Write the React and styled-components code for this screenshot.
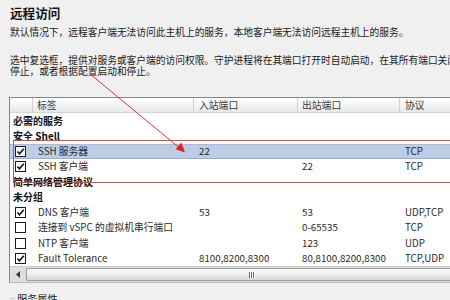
import React from "react";
import styled, { createGlobalStyle } from "styled-components";

const GlobalStyle = createGlobalStyle`
  html, body { margin: 0; padding: 0; background: #f0f0f0; overflow: hidden; }
  body { font-family: "Noto Sans CJK SC", "Liberation Sans", sans-serif; color: #222; }
`;

const Page = styled.div`
  position: relative;
  width: 600px;
  height: 300px;
  overflow: hidden;
  background: #f0f0f0;
`;

const Title = styled.div`
  padding: 5px 0 0 10px;
  height: 16px;
  font-size: 12.6px;
  line-height: 16px;
  font-weight: 700;
  color: #111;
`;

const Desc = styled.div`
  padding-left: 10px;
  margin-top: ${(p) => p.$top}px;
  font-size: 9.72px;
  line-height: 11px;
  color: #1a1a1a;
  white-space: nowrap;
`;

const Table = styled.div`
  margin: ${(p) => p.$top}px 0 0 9px;
  border-top: 1px solid #828790;
  border-left: 1px solid #828790;
  border-bottom: 1px solid #b8b8b8;
  background: #fff;
  width: 591px;
`;

const cols = "23px 161px 104px 102px 1fr";

const Header = styled.div`
  display: grid;
  grid-template-columns: ${cols};
  height: 15px;
  background: linear-gradient(#ffffff, #f1f2f3 60%, #e7e8ea);
  border-bottom: 1px solid #d5d5d5;
  box-sizing: border-box;
`;

const HeadCell = styled.div`
  border-right: 1px solid #d0d0d0;
  padding-left: ${(p) => p.$pad}px;
  font-size: 9.8px;
  line-height: 14px;
  color: #3a3a3a;
  white-space: nowrap;
`;

const Row = styled.div`
  display: grid;
  grid-template-columns: ${cols};
  height: 15.3px;
  align-items: center;
  box-sizing: border-box;
  background: ${(p) => (p.$selected ? "#bccde5" : "transparent")};
  border-top: 1px solid ${(p) => (p.$selected ? "#a9bcd8" : "transparent")};
  border-bottom: 1px solid ${(p) => (p.$selected ? "#98aece" : "transparent")};
`;

const GroupRow = styled.div`
  height: 15.3px;
  line-height: 15.3px;
  padding-left: 3px;
  font-size: 10px;
  font-weight: 700;
  color: #111;
  white-space: nowrap;
`;

const Cell = styled.div`
  padding-left: ${(p) => p.$pad}px;
  font-size: 9.75px;
  line-height: 13px;
  color: #2a2a2a;
  white-space: nowrap;
`;

const CheckCell = styled.div`
  display: flex;
  align-items: center;
  padding-left: 5px;
`;

const Box = styled.div`
  width: 11px;
  height: 11px;
  box-sizing: border-box;
  border: 1px solid #1c1c1c;
  background: #fff;
  display: flex;
  align-items: center;
  justify-content: center;
`;

const Scrollbar = styled.div`
  display: flex;
  height: 16px;
  background: #dedede;
  border-top: 1px solid #c8c8c8;
  box-sizing: border-box;
`;

const ArrowBtn = styled.div`
  width: 15px;
  display: flex;
  align-items: center;
  justify-content: center;
`;

const Thumb = styled.div`
  flex: 1;
  margin: 1px 0 1px 1px;
  border: 1px solid #9c9c9c;
  border-right: none;
  border-radius: 2px 0 0 2px;
  background: linear-gradient(#fafafa, #eeeeee 50%, #d6d6d6);
  position: relative;
`;

const Grip = styled.div`
  position: absolute;
  left: 222px;
  top: 3px;
  display: flex;
  gap: 1px;
  span {
    display: block;
    width: 1px;
    height: 6px;
    background: #6a6a6a;
    box-shadow: 1px 0 0 #fff;
  }
`;

const Group = styled.div`
  margin: 10px 0 0 10px;
  display: flex;
  align-items: center;
  gap: 2px;
`;

const GroupLine = styled.div`
  width: 5px;
  height: 1px;
  background: #c8c8c8;
`;

const GroupLabel = styled.div`
  font-size: 10.2px;
  line-height: 12px;
  color: #222;
`;

const Mark = styled.div`
  position: absolute;
  left: 13px;
  top: 140px;
  width: 620px;
  height: 41px;
  border: 1.5px solid #d94a4a;
  pointer-events: none;
`;

const Overlay = styled.svg`
  position: absolute;
  left: 0;
  top: 0;
  pointer-events: none;
`;

const Check = ({ on }) => (
  <Box>
    {on && (
      <svg width="9" height="9" viewBox="0 0 9 9">
        <polyline points="1.5,4.5 3.5,6.8 7.8,1.8" fill="none" stroke="#111" strokeWidth="1.6" />
      </svg>
    )}
  </Box>
);

const rows = [
  { group: "必需的服务" },
  { group: "安全 Shell" },
  { on: true, label: "SSH 服务器", inp: "22", out: "", proto: "TCP", selected: true },
  { on: true, label: "SSH 客户端", inp: "", out: "22", proto: "TCP" },
  { group: "简单网络管理协议" },
  { group: "未分组" },
  { on: true, label: "DNS 客户端", inp: "53", out: "53", proto: "UDP,TCP" },
  { on: false, label: "连接到 vSPC 的虚拟机串行端口", inp: "", out: "0-65535", proto: "TCP" },
  { on: false, label: "NTP 客户端", inp: "", out: "123", proto: "UDP" },
  { on: true, label: "Fault Tolerance", inp: "8100,8200,8300", out: "80,8100,8200,8300", proto: "TCP,UDP" },
];

export default function App() {
  return (
    <>
      <GlobalStyle />
      <Page>
        <Title>远程访问</Title>
        <Desc $top={5.5}>默认情况下，远程客户端无法访问此主机上的服务，本地客户端无法访问远程主机上的服务。</Desc>
        <Desc $top={17}>选中复选框，提供对服务或客户端的访问权限。守护进程将在其端口打开时自动启动，在其所有端口关闭时</Desc>
        <Desc $top={0}>停止，或者根据配置启动和停止。</Desc>
        <Table $top={20.5}>
          <Header>
            <HeadCell $pad={0} />
            <HeadCell $pad={4}>标签</HeadCell>
            <HeadCell $pad={5}>入站端口</HeadCell>
            <HeadCell $pad={4}>出站端口</HeadCell>
            <HeadCell $pad={5}>协议</HeadCell>
          </Header>
          {rows.map((r, i) =>
            r.group ? (
              <GroupRow key={i}>{r.group}</GroupRow>
            ) : (
              <Row key={i} $selected={r.selected}>
                <CheckCell>
                  <Check on={r.on} />
                </CheckCell>
                <Cell $pad={5}>{r.label}</Cell>
                <Cell $pad={5}>{r.inp}</Cell>
                <Cell $pad={4}>{r.out}</Cell>
                <Cell $pad={5}>{r.proto}</Cell>
              </Row>
            )
          )}
          <Scrollbar>
            <ArrowBtn>
              <svg width="4" height="7" viewBox="0 0 4 7">
                <polygon points="4,0 0,3.5 4,7" fill="#333" />
              </svg>
            </ArrowBtn>
            <Thumb>
              <Grip>
                <span />
                <span />
                <span />
              </Grip>
            </Thumb>
          </Scrollbar>
        </Table>
        <Group>
          <GroupLine />
          <GroupLabel>服务属性</GroupLabel>
        </Group>
        <Mark />
        <Overlay width="450" height="300" viewBox="0 0 450 300">
          <line x1="90" y1="74" x2="179" y2="147.5" stroke="#d03838" strokeWidth="1" />
          <polygon points="185,152.5 175.8,149.2 181.2,142.6" fill="#e02020" />
        </Overlay>
      </Page>
    </>
  );
}
